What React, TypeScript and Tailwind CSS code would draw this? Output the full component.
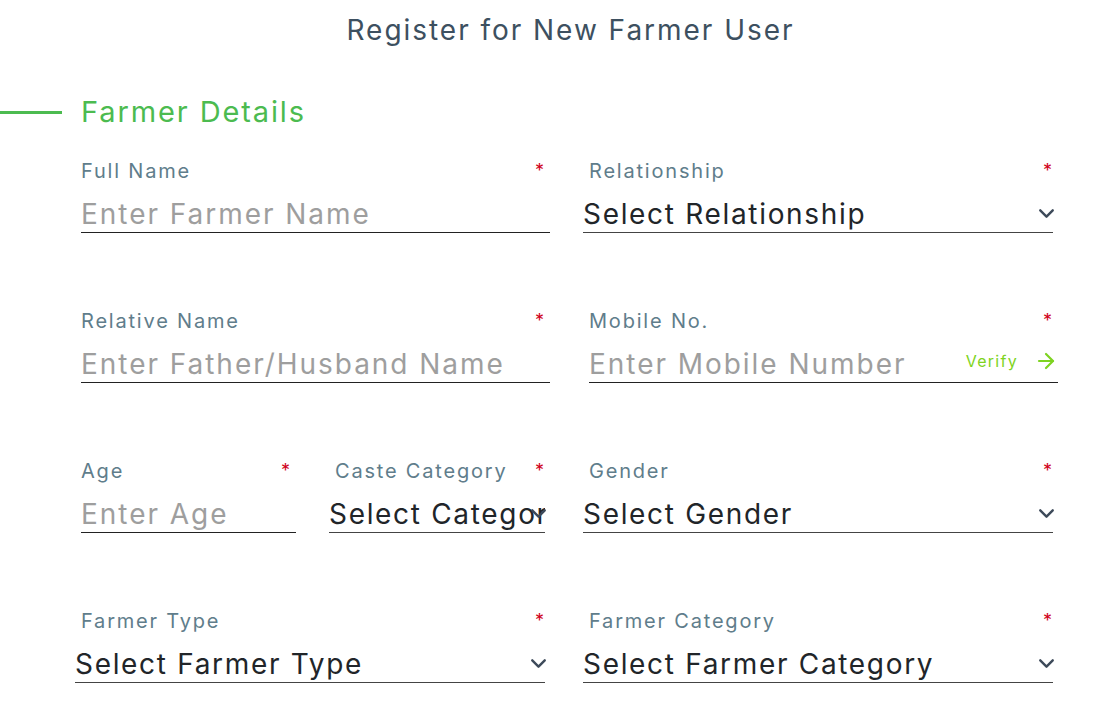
import { ChevronDown, ArrowRight } from "lucide-react";
import { ReactNode } from "react";

const font = { fontFamily: "Inter, 'Noto Sans', sans-serif" };

const Label = ({ text, required = true }: { text: string; required?: boolean }) => (
  <div className="flex h-[24px] items-center justify-between pl-[6px] pr-[1px]">
    <span className="text-[20px] tracking-[0.09em] text-[#607d8b]">{text}</span>
    {required && <span className="text-[18px] leading-none text-[#d0021b]">*</span>}
  </div>
);

const TextField = ({
  label,
  placeholder,
  right,
}: {
  label: string;
  placeholder: string;
  right?: ReactNode;
}) => (
  <div>
    <Label text={label} />
    <div className="ml-[6px] mr-[-5px] flex h-[50px] items-end border-b border-[#222]">
      <span className="flex-1 truncate text-[28px] leading-[36px] tracking-[0.07em] text-[#9e9e9e]">
        {placeholder}
      </span>
      {right}
    </div>
  </div>
);

const SelectField = ({ label, value }: { label: string; value: string }) => (
  <div>
    <Label text={label} />
    <div className="relative flex h-[50px] items-end border-b border-[#444]">
      <div className="w-full overflow-hidden">
        <span className="whitespace-nowrap text-[28px] leading-[36px] tracking-[0.06em] text-[#212529]">
          {value}
        </span>
      </div>
      <ChevronDown
        className="absolute right-[-6px] top-[18px] size-[25px] text-[#3d4a5a]"
        strokeWidth={2.3}
      />
    </div>
  </div>
);

export default function App() {
  return (
    <div className="min-h-screen bg-white" style={font}>
      <div className="flex h-[60px] items-center justify-center pl-[30px]">
        <h1 className="text-[28px] tracking-[0.07em] text-[#3d5060]">Register for New Farmer User</h1>
      </div>

      <div className="mt-[32px] flex h-[40px] items-center gap-[19px]">
        <div className="h-[3px] w-[62px] bg-[#4cbb50]" />
        <h2 className="text-[29px] tracking-[0.065em] text-[#4cbb50]">Farmer Details</h2>
      </div>

      <div className="mt-[27px] grid w-[1053px] grid-cols-2 gap-x-[38px] gap-y-[76px] pl-[75px]">
        <TextField label="Full Name" placeholder="Enter Farmer Name" />
        <SelectField label="Relationship" value="Select Relationship" />

        <TextField label="Relative Name" placeholder="Enter Father/Husband Name" />
        <TextField
          label="Mobile No."
          placeholder="Enter Mobile Number"
          right={
            <div className="mb-[9px] flex items-center gap-[16px] text-[#7ed321]">
              <span className="text-[16px] tracking-[0.08em]">Verify</span>
              <ArrowRight className="size-[24px]" strokeWidth={2.2} />
            </div>
          }
        />

        <div className="grid grid-cols-2 gap-x-[38px]">
          <TextField label="Age" placeholder="Enter Age" />
          <SelectField label="Caste Category" value="Select Category" />
        </div>
        <SelectField label="Gender" value="Select Gender" />

        <SelectField label="Farmer Type" value="Select Farmer Type" />
        <SelectField label="Farmer Category" value="Select Farmer Category" />
      </div>
    </div>
  );
}
